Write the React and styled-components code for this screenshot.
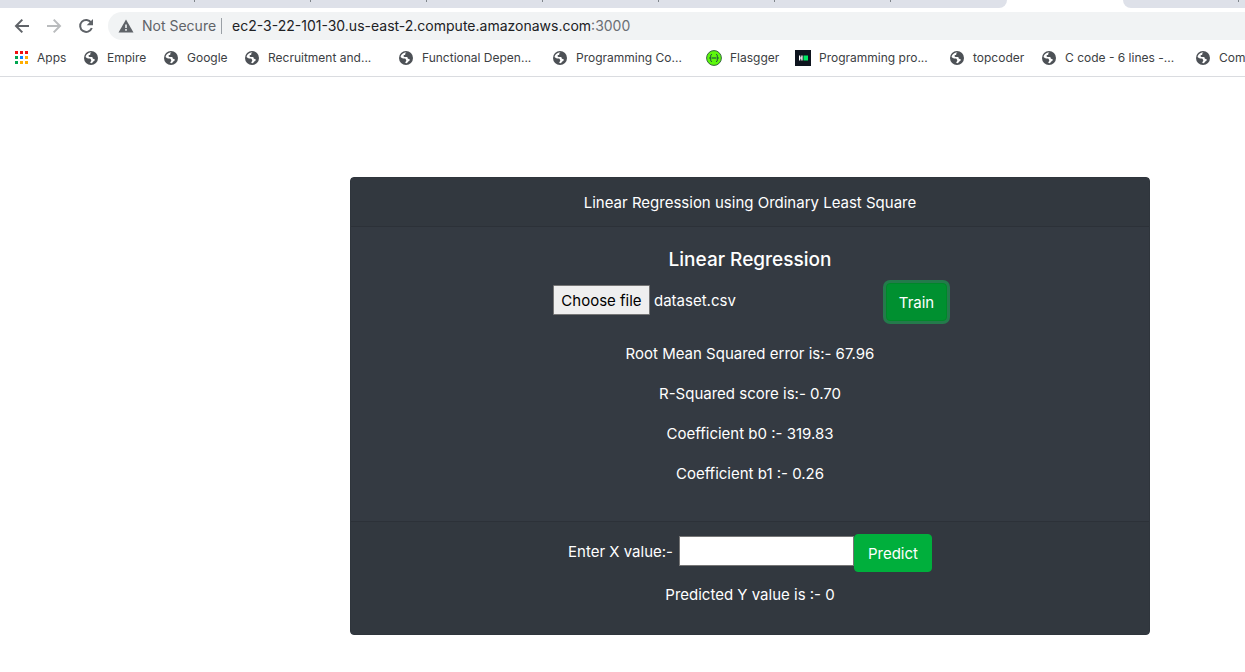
import React, { useRef, useState } from "react";
import styled, { createGlobalStyle } from "styled-components";

const GlobalStyle = createGlobalStyle`
  *, *::before, *::after { box-sizing: border-box; }
  body {
    margin: 0;
    background: #fff;
    font-family: Inter, "Liberation Sans", sans-serif;
    font-size: 15px;
    line-height: 24px;
    overflow-x: hidden;
  }
`;

const Browser = styled.header`
  border-bottom: 1px solid #dadce0;
  overflow: hidden;
`;

const TabStrip = styled.div`
  display: flex;
  height: 8px;
  background: #fff;
`;

const TabGroup = styled.div`
  display: flex;
  flex: ${(p) => (p.$grow ? "1 0 0" : "none")};
  background: #dee1e9;
  border-radius: ${(p) => (p.$grow ? "0 0 0 8px" : "0 0 8px 0")};
`;

const Tab = styled.div`
  width: ${(p) => (p.$first ? 195 : 116)}px;
  height: 2px;
  border-right: ${(p) => (p.$last ? "0" : "1px solid #80868b")};
`;

const ActiveTab = styled.div`
  width: 116px;
`;

const Toolbar = styled.div`
  display: flex;
  align-items: center;
  height: 36px;
  padding-left: 12px;
`;

const ToolButton = styled.button`
  display: flex;
  align-items: center;
  justify-content: center;
  width: 20px;
  height: 20px;
  margin-right: 12px;
  padding: 0;
  border: 0;
  background: none;
  color: ${(p) => (p.disabled ? "#babcbe" : "#5f6368")};
`;

const AddressBar = styled.div`
  display: flex;
  flex: 1;
  align-items: center;
  height: 28px;
  padding-left: 10px;
  border-radius: 14px 0 0 14px;
  background: #f1f3f4;
  font-size: 14px;
  line-height: 20px;
  white-space: nowrap;
`;

const Security = styled.span`
  display: flex;
  align-items: center;
  gap: 8px;
  padding-right: 5px;
  color: #5f6368;
`;

const Divider = styled.span`
  width: 1px;
  height: 16px;
  margin-right: 10px;
  background: #9aa0a6;
`;

const Url = styled.span`
  color: #202124;
`;

const Port = styled.span`
  color: #6b6f74;
`;

const Bookmarks = styled.nav`
  display: flex;
  height: 32px;
  padding: 0 0 4px 13px;
`;

const Bookmark = styled.a`
  display: flex;
  flex: none;
  align-items: center;
  gap: 8px;
  width: ${(p) => p.$width}px;
  color: #3c4043;
  font-size: 12px;
  line-height: 16px;
  text-decoration: none;
  white-space: nowrap;

  svg { flex: none; }
`;

const Card = styled.main`
  max-width: 800px;
  margin: 100px 0 0 350px;
  border: 1px solid #2f353c;
  border-radius: 4px;
  background: #343a42;
  color: #fff;
  text-align: center;
`;

const CardHeader = styled.div`
  padding: 13px 20px 11px;
  border-bottom: 1px solid #2c3138;
  background: #32383f;
`;

const CardBody = styled.div`
  padding: 20px 20px 19px;
`;

const CardFooter = styled.div`
  padding: 12px 20px 11px;
  border-top: 1px solid #2c3138;
  border-radius: 0 0 3px 3px;
  background: #32383f;
`;

const Title = styled.h5`
  margin: 0 0 10px;
  font-size: 19px;
  font-weight: 500;
  line-height: 26px;
`;

const TrainRow = styled.form`
  display: flex;
  justify-content: center;
  margin-bottom: 21px;
`;

const FilePicker = styled.div`
  display: flex;
  align-items: center;
  gap: 4px;
  width: 333px;
  height: 34px;
`;

const HiddenInput = styled.input`
  display: none;
`;

const FileButton = styled.button`
  height: 30px;
  width: 97px;
  padding: 2px 0 0;
  border: 1px solid #767676;
  border-radius: 1px;
  background: #efefef;
  color: #000;
  font: inherit;
  white-space: nowrap;
`;

const FileName = styled.span`
  padding-top: 2px;
`;

const Button = styled.button`
  height: 38px;
  width: ${(p) => p.$width}px;
  padding: 2px 0 0;
  border: 1px solid ${(p) => (p.$active ? "#008729" : "#00af3c")};
  border-radius: 4px;
  background: ${(p) => (p.$active ? "#009030" : "#00af3c")};
  box-shadow: ${(p) => (p.$active ? "0 0 0 3px #247a4b" : "none")};
  color: #fff;
  font: inherit;
`;

const Result = styled.p`
  margin: 0 0 16px;
`;

const PredictRow = styled.form`
  display: flex;
  justify-content: center;
  margin-bottom: 11px;
`;

const FieldLabel = styled.label`
  padding: 6px 6px 0 0;
`;

const ValueInput = styled.input`
  width: 175px;
  height: 30px;
  margin-top: 2px;
  padding: 1px 2px;
  border: 1px solid #767676;
  background: #fff;
  font: inherit;
`;

const BackIcon = () => (
  <svg width="20" height="20" viewBox="0 0 20 20" fill="none" stroke="currentColor" strokeWidth="2">
    <path d="M17 10H4.5M10.3 3.6 4 10l6.3 6.4" />
  </svg>
);

const ForwardIcon = () => (
  <svg width="20" height="20" viewBox="0 0 20 20" fill="none" stroke="currentColor" strokeWidth="2">
    <path d="M3 10h12.5M9.7 3.6 16 10l-6.3 6.4" />
  </svg>
);

const ReloadIcon = () => (
  <svg width="20" height="20" viewBox="0 0 20 20" fill="none">
    <path d="M15.2 6.6A6 6 0 1 0 15.8 12" stroke="currentColor" strokeWidth="2" />
    <path d="M17 3v6.3h-6.3z" fill="currentColor" />
  </svg>
);

const WarningIcon = () => (
  <svg width="16" height="14" viewBox="0 0 16 14">
    <path d="M8 0.5 15.5 13.5H0.5z" fill="#5f6368" />
    <path d="M7.2 5.5h1.6v3.4H7.2zM7.2 10h1.6v1.7H7.2z" fill="#f1f3f4" />
  </svg>
);

const AppsIcon = () => (
  <svg width="16" height="16" viewBox="0 0 16 16" shapeRendering="crispEdges">
    <path d="M2 1h3v3H2zM7 1h3v3H7zM12 1h3v3h-3z" fill="#f00f0f" />
    <path d="M2 6h3v3H2zM2 11h3v3H2z" fill="#00a550" />
    <path d="M7 6h3v3H7z" fill="#0a84ff" />
    <path d="M12 6h3v3h-3zM7 11h3v3H7zM12 11h3v3h-3z" fill="#ffad00" />
  </svg>
);

const GlobeIcon = () => (
  <svg width="16" height="16" viewBox="0 0 16 16">
    <circle cx="8" cy="8" r="7" fill="#4d5156" />
    <path
      d="M8.7 2.6c-.9.2-1.4.8-1.4 1.6 0 .6-.4.9-1 .9-.6.1-.8.5-.7 1.1.1.5.5.7 1.1.7h1.8c.8 0 1.2.5 1.2 1.2 0 .6.4.8 1 .8.8 0 1.1.5 1 1.1-.1.8-.7 1.3-1.5 1.5-.3.8-.8 1.4-1.6 1.8-.9 0-1.5-.2-2.1-.5.9-.2 1.3-.7 1.3-1.4 0-.6.4-.8.8-1-.5-.3-.8-.7-.8-1.2 0-.5-.4-.7-1-.7-1.6.1-2.9-.4-4.2-1.5C2.7 5.8 3.2 5 4 4.3 5.2 3.1 6.9 2.4 8.7 2.6z"
      fill="#fff"
    />
  </svg>
);

const FlasggerIcon = () => (
  <svg width="16" height="16" viewBox="0 0 16 16" fill="none" stroke="#173647">
    <circle cx="8" cy="8" r="7.4" fill="#5df80c" stroke="#35663f" />
    <path d="M6 4.5c-1 0-1.3.4-1.3 1.2v1c0 .8-.3 1.2-1.2 1.3.9.1 1.2.5 1.2 1.3v1c0 .8.3 1.2 1.3 1.2M10 4.5c1 0 1.3.4 1.3 1.2v1c0 .8.3 1.2 1.2 1.3-.9.1-1.2.5-1.2 1.3v1c0 .8-.3 1.2-1.3 1.2" />
    <path d="M5.5 8h5" />
  </svg>
);

const HackerRankIcon = () => (
  <svg width="16" height="16" viewBox="0 0 16 16">
    <path d="M0 0h16v16H0z" fill="#0e141e" />
    <path d="M4 5.5h1.3v2h1V5.5h1.3v5H6.3v-2h-1v2H4z" fill="#fff" />
    <path d="M8.500 5.5H13v5H8.500z" fill="#00ea64" />
  </svg>
);

const bookmarks = [
  { label: "Apps", icon: AppsIcon, width: 70 },
  { label: "Empire", icon: GlobeIcon, width: 80 },
  { label: "Google", icon: GlobeIcon, width: 81 },
  { label: "Recruitment and...", icon: GlobeIcon, width: 154 },
  { label: "Functional Depen...", icon: GlobeIcon, width: 154 },
  { label: "Programming Co...", icon: GlobeIcon, width: 154 },
  { label: "Flasgger", icon: FlasggerIcon, width: 89 },
  { label: "Programming pro...", icon: HackerRankIcon, width: 154 },
  { label: "topcoder", icon: GlobeIcon, width: 92 },
  { label: "C code - 6 lines -...", icon: GlobeIcon, width: 154 },
  { label: "Com", icon: GlobeIcon, width: 154 },
];

const results = [
  "Root Mean Squared error is:- 67.96",
  "R-Squared score is:- 0.70",
  "Coefficient b0 :- 319.83",
  "Coefficient b1 :- 0.26",
];

export default function App() {
  const picker = useRef(null);
  const [fileName, setFileName] = useState("dataset.csv");
  const [xValue, setXValue] = useState("");

  return (
    <>
      <GlobalStyle />
      <Browser>
        <TabStrip>
          <TabGroup>
            <Tab $first />
            {[1, 2, 3, 4, 5, 6].map((n) => (
              <Tab key={n} />
            ))}
            <Tab $last />
          </TabGroup>
          <ActiveTab />
          <TabGroup $grow>
            <Tab />
          </TabGroup>
        </TabStrip>
        <Toolbar>
          <ToolButton type="button" aria-label="Back"><BackIcon /></ToolButton>
          <ToolButton type="button" aria-label="Forward" disabled><ForwardIcon /></ToolButton>
          <ToolButton type="button" aria-label="Reload"><ReloadIcon /></ToolButton>
          <AddressBar>
            <Security>
              <WarningIcon />
              Not Secure
            </Security>
            <Divider />
            <Url>ec2-3-22-101-30.us-east-2.compute.amazonaws.com</Url>
            <Port>:3000</Port>
          </AddressBar>
        </Toolbar>
        <Bookmarks aria-label="Bookmarks">
          {bookmarks.map(({ label, icon: Icon, width }) => (
            <Bookmark key={label} href="#" $width={width}>
              <Icon />
              {label}
            </Bookmark>
          ))}
        </Bookmarks>
      </Browser>

      <Card>
        <CardHeader>Linear Regression using Ordinary Least Square</CardHeader>
        <CardBody>
          <Title>Linear Regression</Title>
          <TrainRow onSubmit={(e) => e.preventDefault()}>
            <FilePicker>
              <HiddenInput
                ref={picker}
                type="file"
                aria-label="Dataset"
                onChange={(e) => setFileName(e.target.files[0]?.name ?? "")}
              />
              <FileButton type="button" onClick={() => picker.current.click()}>
                Choose file
              </FileButton>
              <FileName>{fileName}</FileName>
            </FilePicker>
            <Button type="submit" $active $width={61}>Train</Button>
          </TrainRow>
          {results.map((text) => (
            <Result key={text}>{text}</Result>
          ))}
        </CardBody>
        <CardFooter>
          <PredictRow onSubmit={(e) => e.preventDefault()}>
            <FieldLabel htmlFor="x-value">Enter X value:-</FieldLabel>
            <ValueInput
              id="x-value"
              type="text"
              value={xValue}
              onChange={(e) => setXValue(e.target.value)}
            />
            <Button type="submit" $width={78}>Predict</Button>
          </PredictRow>
          <Result>Predicted Y value is :- 0</Result>
        </CardFooter>
      </Card>
    </>
  );
}
